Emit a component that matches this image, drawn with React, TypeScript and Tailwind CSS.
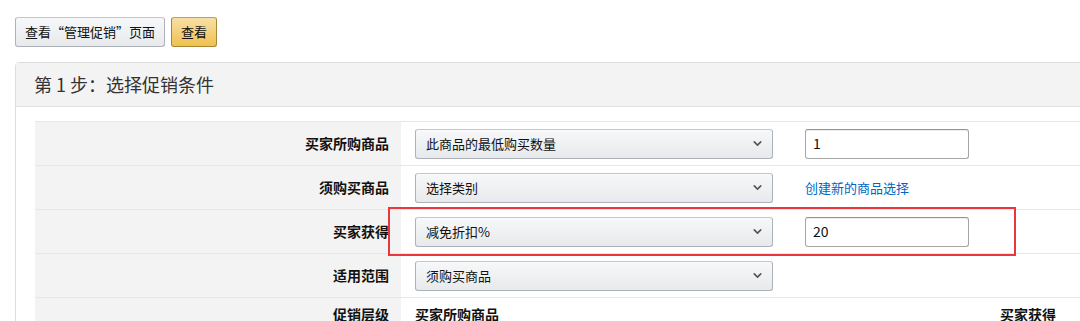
import { ChevronDown } from 'lucide-react';

const font = { fontFamily: '"Noto Sans CJK SC", "Noto Sans", sans-serif' };

function Select({ value }: { value: string }) {
  return (
    <div className="flex items-center justify-between w-[358px] h-[30px] pl-[10px] pr-[8px] rounded-[3px] border border-[#adb1b8] border-t-[#c3c6ca] bg-gradient-to-b from-[#f7f8fa] to-[#e7e9ec] shadow-[0_1px_0_rgba(255,255,255,0.6)_inset] text-[13px] text-[#111]">
      <span>{value}</span>
      <ChevronDown className="h-[13px] w-[13px] text-[#555]" strokeWidth={3} />
    </div>
  );
}

function TextInput({ value }: { value: string }) {
  return (
    <div className="flex items-center w-[164px] h-[30px] px-[7px] rounded-[3px] border border-[#a6a6a6] border-t-[#949494] bg-white shadow-[0_1px_0_rgba(0,0,0,0.07)_inset] text-[14px] text-[#111]">
      {value}
    </div>
  );
}

function Row({ label, children, extra }: { label: string; children: React.ReactNode; extra?: React.ReactNode }) {
  return (
    <div className="flex h-[44px] border-b border-[#e7e7e7]">
      <div className="w-[366px] shrink-0 bg-[#f3f3f3] flex items-center justify-end pr-[12px] text-[14px] font-bold text-[#111]">
        {label}
      </div>
      <div className="w-[372px] shrink-0 pl-[14px] flex items-center">{children}</div>
      <div className="pl-[32px] flex items-center">{extra}</div>
    </div>
  );
}

export default function App() {
  return (
    <div className="w-[1080px] h-[321px] overflow-hidden bg-white" style={font}>
      {/* top buttons */}
      <div className="flex gap-[6px] pl-[15px] pt-[17px]">
        <button className="h-[30px] px-[9px] rounded-[3px] border border-[#adb1b8] border-t-[#c3c6ca] bg-gradient-to-b from-[#f7f8fa] to-[#e7e9ec] text-[13px] text-[#111]">
          查看“管理促销”页面
        </button>
        <button className="h-[30px] px-[9px] rounded-[3px] border border-[#a88734] border-t-[#c5a14b] bg-gradient-to-b from-[#f7dfa5] to-[#f0c14b] text-[13px] text-[#111]">
          查看
        </button>
      </div>

      {/* step panel */}
      <div className="ml-[15px] mt-[15px] w-[1100px] border border-[#dddddd] rounded-[4px]">
        <div className="h-[44px] flex items-center pl-[18px] bg-[#f3f3f3] border-b border-[#e3e3e3] text-[18px] text-[#333]">
          第 1 步：选择促销条件
        </div>
        <div className="pt-[14px] pl-[19px]">
          <div className="relative border-t border-[#e7e7e7]">
            <Row label="买家所购商品" extra={<TextInput value="1" />}>
              <Select value="此商品的最低购买数量" />
            </Row>
            <Row
              label="须购买商品"
              extra={<span className="text-[13px] text-[#0066c0]">创建新的商品选择</span>}
            >
              <Select value="选择类别" />
            </Row>
            <Row label="买家获得" extra={<TextInput value="20" />}>
              <Select value="减免折扣%" />
            </Row>
            <Row label="适用范围">
              <Select value="须购买商品" />
            </Row>
            <div className="flex h-[44px] pt-[6px] text-[14px] font-bold text-[#111]">
              <div className="w-[366px] shrink-0 bg-[#f3f3f3] -mt-[6px] pt-[6px] text-right pr-[12px]">
                促销层级
              </div>
              <div className="w-[599px] shrink-0 pl-[14px]">买家所购商品</div>
              <div>买家获得</div>
            </div>
            {/* red annotation box */}
            <div className="absolute left-[353px] top-[85px] w-[628px] h-[49px] border-2 border-[#e8383d] pointer-events-none" />
          </div>
        </div>
      </div>
    </div>
  );
}
